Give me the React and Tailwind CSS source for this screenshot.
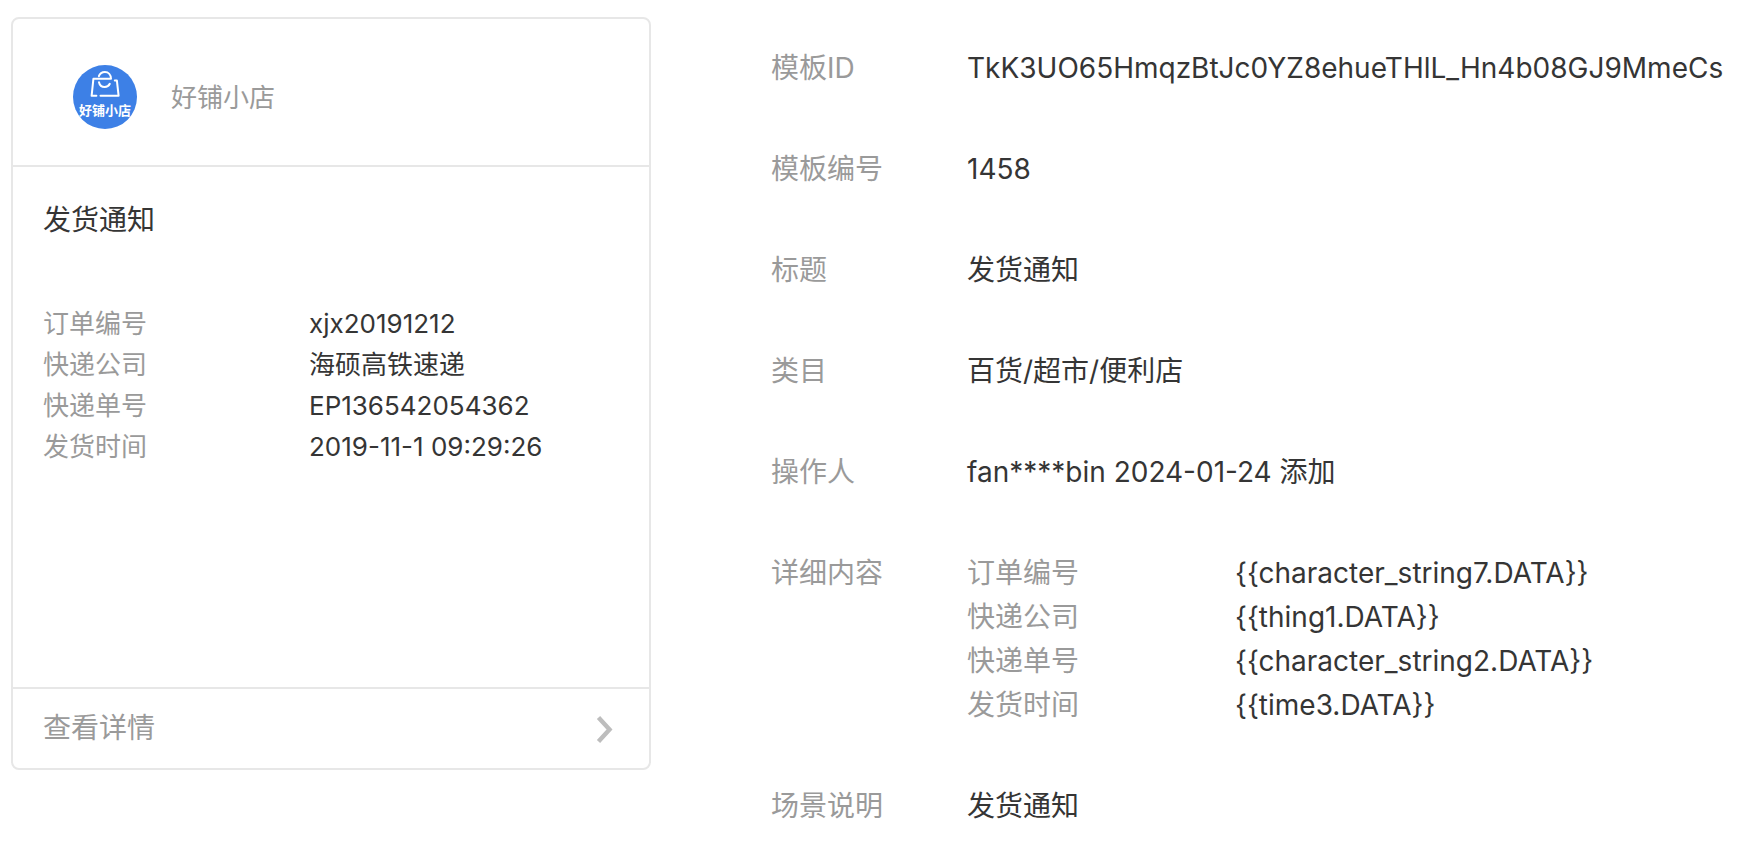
const messageFields = [
  ["订单编号", "xjx20191212"],
  ["快递公司", "海硕高铁速递"],
  ["快递单号", "EP136542054362"],
  ["发货时间", "2019-11-1 09:29:26"],
];

const templateFields = [
  ["订单编号", "{{character_string7.DATA}}"],
  ["快递公司", "{{thing1.DATA}}"],
  ["快递单号", "{{character_string2.DATA}}"],
  ["发货时间", "{{time3.DATA}}"],
];

function ShopLogo() {
  return (
    <svg viewBox="0 0 64 64" className="size-16 shrink-0" aria-hidden="true">
      <circle cx="32" cy="32" r="32" fill="#3d80e6" />
      <g fill="none" stroke="#fff" strokeWidth="2" strokeLinecap="round" strokeLinejoin="round">
        <path d="M25.9 11.2C26.8 8.6 29.2 7 31.9 7C35.4 7 37.9 9.8 38 13.8H20.4L18.6 30.8H23.4" />
        <path d="M27.5 30.8H45.6L43.9 15.6H41.8" />
        <path d="M26 17.2C26.6 20 28.9 22 31.7 22C34 22 35.8 20.9 36.8 18.8" />
      </g>
      <text
        x="32"
        y="49.5"
        textAnchor="middle"
        fill="#fff"
        className="font-['Noto_Sans_CJK_SC',sans-serif] text-[13px] font-bold"
      >
        好铺小店
      </text>
    </svg>
  );
}

function MessageCard() {
  return (
    <section className="flex w-full max-w-[640px] flex-col rounded-lg border-2 border-[#e7e7e7]">
      <header className="flex items-center gap-[34px] border-b-2 border-[#e7e7e7] px-[60px] pt-[46px] pb-9">
        <ShopLogo />
        <span className="text-[26px] leading-[41px] text-[#9a9a9a]">好铺小店</span>
      </header>
      <div className="min-h-[520px] px-[30px] pt-[31px] pb-[60px]">
        <h2 className="text-[28px] leading-[45px]">发货通知</h2>
        <dl className="mt-[60px] text-[26px] leading-[41px]">
          {messageFields.map(([label, value]) => (
            <div key={label} className="flex">
              <dt className="w-[266px] shrink-0 text-[#9a9a9a]">{label}</dt>
              <dd className="min-w-0 break-words">{value}</dd>
            </div>
          ))}
        </dl>
      </div>
      <a
        href="#detail"
        className="flex items-center justify-between border-t-2 border-[#e7e7e7] px-[30px] py-[17px] text-[28px] leading-[45px] text-[#9a9a9a]"
      >
        查看详情
        <svg viewBox="0 0 30 30" className="size-[30px]" fill="none" stroke="#bdbdbd" strokeWidth="4.4" aria-hidden="true">
          <path d="M9.5 3.5L20.5 15.5L9.5 27.5" />
        </svg>
      </a>
    </section>
  );
}

function Row({ label, children }) {
  return (
    <div className="flex">
      <dt className="w-[196px] shrink-0 text-[#9a9a9a]">{label}</dt>
      <dd className="min-w-0 flex-1 break-words">{children}</dd>
    </div>
  );
}

export default function App() {
  return (
    <main className="flex flex-col items-start gap-[120px] bg-white pt-[17px] pl-[11px] font-[Inter,'Noto_Sans_CJK_SC',sans-serif] text-[#353535] xl:flex-row">
      <MessageCard />
      <dl className="flex min-w-0 flex-1 flex-col gap-[57px] pt-[29px] pb-6 text-[28px] leading-[44px]">
        <Row label="模板ID">TkK3UO65HmqzBtJc0YZ8ehueTHlL_Hn4b08GJ9MmeCs</Row>
        <Row label="模板编号">1458</Row>
        <Row label="标题">发货通知</Row>
        <Row label="类目">百货/超市/便利店</Row>
        <Row label="操作人">fan****bin 2024-01-24 添加</Row>
        <Row label="详细内容">
          <dl>
            {templateFields.map(([label, value]) => (
              <div key={label} className="flex">
                <dt className="w-[268px] shrink-0 text-[#9a9a9a]">{label}</dt>
                <dd className="min-w-0 break-words">{value}</dd>
              </div>
            ))}
          </dl>
        </Row>
        <Row label="场景说明">发货通知</Row>
      </dl>
    </main>
  );
}
